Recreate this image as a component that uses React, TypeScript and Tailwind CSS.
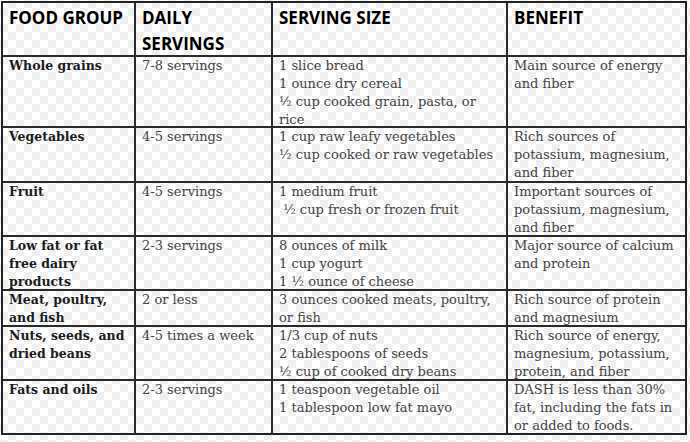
const header = ["FOOD GROUP", "DAILY\nSERVINGS", "SERVING SIZE", "BENEFIT"];

const rows = [
  {
    h: "h-[71px]",
    group: ["Whole grains"],
    daily: "7-8 servings",
    size: ["1 slice bread", "1 ounce dry cereal", "½ cup cooked grain, pasta, or", "rice"],
    benefit: ["Main source of energy", "and fiber"],
  },
  {
    h: "h-[55px]",
    group: ["Vegetables"],
    daily: "4-5 servings",
    size: ["1 cup raw leafy vegetables", "½ cup cooked or raw vegetables"],
    benefit: ["Rich sources of", "potassium, magnesium,", "and fiber"],
  },
  {
    h: "h-[54px]",
    group: ["Fruit"],
    daily: "4-5 servings",
    size: ["1 medium fruit", " ½ cup fresh or frozen fruit"],
    benefit: ["Important sources of", "potassium, magnesium,", "and fiber"],
  },
  {
    h: "h-[54px]",
    group: ["Low fat or fat", "free dairy", "products"],
    daily: "2-3 servings",
    size: ["8 ounces of milk", "1 cup yogurt", "1 ½ ounce of cheese"],
    benefit: ["Major source of calcium", "and protein"],
  },
  {
    h: "h-[36px]",
    group: ["Meat, poultry,", "and fish"],
    daily: "2 or less",
    size: ["3 ounces cooked meats, poultry,", "or fish"],
    benefit: ["Rich source of protein", "and magnesium"],
  },
  {
    h: "h-[54px]",
    group: ["Nuts, seeds, and", "dried beans"],
    daily: "4-5 times a week",
    size: ["1/3 cup of nuts", "2 tablespoons of seeds", "½ cup of cooked dry beans"],
    benefit: ["Rich source of energy,", "magnesium, potassium,", "protein, and fiber"],
  },
  {
    h: "h-[52px]",
    group: ["Fats and oils"],
    daily: "2-3 servings",
    size: ["1 teaspoon vegetable oil", "1 tablespoon low fat mayo"],
    benefit: ["DASH is less than 30%", "fat, including the fats in", "or added to foods."],
  },
];

function Lines({ lines }: { lines: string[] }) {
  return (
    <>
      {lines.map((l, i) => (
        <div key={i} className="whitespace-pre">
          {l}
        </div>
      ))}
    </>
  );
}

export default function App() {
  return (
    <div className="w-[690px] h-[442px] bg-[conic-gradient(#efefef_25%,#ffffff_0_50%,#efefef_0_75%,#ffffff_0)] bg-[length:16px_16px] pt-px pl-px">
      <div className="w-[686px] border-2 border-[#222]">
        <div className="grid grid-cols-[133px_137px_235px_177px] h-[54px] border-b-2 border-[#2a2a2a] font-['Open_Sans',sans-serif] font-bold text-[17px] leading-[26px] text-black">
          {header.map((t, i) => (
            <div
              key={i}
              className={`pl-[6px] pt-[2px] whitespace-pre ${i < 3 ? "border-r-2 border-[#2a2a2a]" : ""}`}
            >
              {t}
            </div>
          ))}
        </div>
        {rows.map((r, ri) => (
          <div
            key={ri}
            className={`grid grid-cols-[133px_137px_235px_177px] ${r.h} ${ri < rows.length - 1 ? "border-b-2 border-[#2a2a2a]" : ""} font-['DejaVu_Serif',serif] text-[13px] leading-[18px]`}
          >
            <div className="pl-[6px] border-r-2 border-[#2a2a2a] font-bold text-[12.5px] text-[#1c1c1c]">
              <Lines lines={r.group} />
            </div>
            <div className="pl-[6px] border-r-2 border-[#2a2a2a] text-[#444]">
              <Lines lines={[r.daily]} />
            </div>
            <div className="pl-[6px] border-r-2 border-[#2a2a2a] text-[#444]">
              <Lines lines={r.size} />
            </div>
            <div className="pl-[6px] text-[#444]">
              <Lines lines={r.benefit} />
            </div>
          </div>
        ))}
      </div>
    </div>
  );
}
